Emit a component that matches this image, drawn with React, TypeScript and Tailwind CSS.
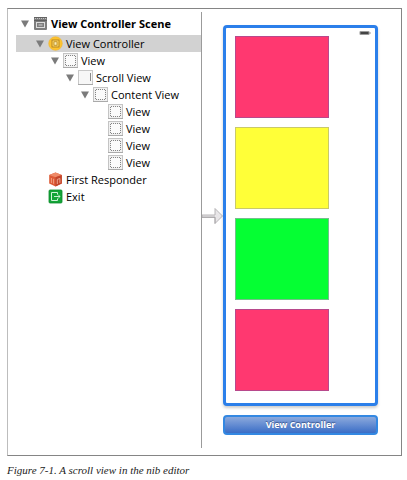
import React, { useState } from 'react';

type IconKind = 'scene' | 'controller' | 'view' | 'scroll' | 'responder' | 'exit';

interface TreeRow {
  label: string;
  icon: IconKind;
  indent: string;
  level: number;
  expandable?: boolean;
}

const rows: TreeRow[] = [
  { label: 'View Controller', icon: 'controller', indent: 'pl-[19px]', level: 2, expandable: true },
  { label: 'View', icon: 'view', indent: 'pl-[34px]', level: 3, expandable: true },
  { label: 'Scroll View', icon: 'scroll', indent: 'pl-[49px]', level: 4, expandable: true },
  { label: 'Content View', icon: 'view', indent: 'pl-[64px]', level: 5, expandable: true },
  { label: 'View', icon: 'view', indent: 'pl-[79px]', level: 6 },
  { label: 'View', icon: 'view', indent: 'pl-[79px]', level: 6 },
  { label: 'View', icon: 'view', indent: 'pl-[79px]', level: 6 },
  { label: 'View', icon: 'view', indent: 'pl-[79px]', level: 6 },
  { label: 'First Responder', icon: 'responder', indent: 'pl-[19px]', level: 2 },
  { label: 'Exit', icon: 'exit', indent: 'pl-[19px]', level: 2 },
];

const blocks = [
  'bg-[#ff3870] border-[#b8498c]',
  'bg-[#ffff38] border-[#c9c96a]',
  'bg-[#05ff33] border-[#74bf8c]',
  'bg-[#ff3870] border-[#b8498c]',
];

function RowIcon({ kind }: { kind: IconKind }) {
  return (
    <svg viewBox="0 0 15 15" className="size-[15px] shrink-0" fill="none" aria-hidden="true">
      {kind === 'scene' && (
        <>
          <rect x="1" y="1" width="13" height="13" rx="1" fill="#7d7d7d" />
          <path d="M1 1.5h13" stroke="#636363" />
          <path d="M2 2.5h11" stroke="#c4c4c4" strokeDasharray="1 1" />
          <path d="M1 4.5h13" stroke="#5f5f5f" />
          <rect x="3.5" y="6.5" width="8" height="5" stroke="#dcdcdc" />
          <path d="M5.5 9h4" stroke="#d2d2d2" />
        </>
      )}
      {kind === 'controller' && (
        <>
          <circle cx="7.5" cy="7.5" r="6.8" fill="#fdc32f" stroke="#f2b52c" strokeWidth="0.6" />
          <rect x="4" y="4" width="7" height="7" fill="#ffd65c" stroke="#a5781c" strokeWidth="0.8" />
          <rect x="6" y="5.8" width="3" height="3.4" fill="#fff0b0" stroke="#a5781c" strokeWidth="0.7" />
        </>
      )}
      {kind === 'view' && (
        <>
          <rect x="0.5" y="0.5" width="14" height="14" fill="#f1f1f1" stroke="#c4c4c4" />
          <path d="M0 14.5h15" stroke="#aaaaaa" />
          <rect x="3" y="3" width="9" height="9" fill="#fbfbfb" />
          <path d="M3 2.5h9M3 12.5h9M2.5 3v9M12.5 3v9" stroke="#858585" strokeDasharray="1 1" />
        </>
      )}
      {kind === 'scroll' && (
        <>
          <rect x="0.5" y="0.5" width="14" height="14" fill="#f7f7f7" stroke="#c8c8c8" />
          <path d="M0 14.5h15" stroke="#a8a8a8" />
          <path d="M12.5 3v8" stroke="#8a8a8a" />
        </>
      )}
      {kind === 'responder' && (
        <>
          <path d="M7.5 0.5 13.8 3v8.6L7.5 14.5 1.2 11.6V3z" fill="#dd5a36" />
          <path d="M7.5 0.5 13.8 3 7.5 5.2 1.2 3z" fill="#ee8a68" />
          <path d="M7.5 5.2 13.8 3v8.6L7.5 14.5z" fill="#c2442a" />
          <path d="M3.4 6v5M5.6 6.8v5" stroke="#f3a68a" strokeWidth="0.9" />
          <path d="M9.3 12V7.4l2.6-.9v4.4" stroke="#f3b098" strokeWidth="0.9" />
        </>
      )}
      {kind === 'exit' && (
        <>
          <rect x="1" y="1" width="13" height="13" rx="1" fill="#14a538" stroke="#0b8c2b" strokeWidth="0.8" />
          <path d="M9.5 5.5v-2h-6v8h6v-2" stroke="#d0f3d8" />
          <path d="M6 7.5h6M10.2 5.7l1.8 1.8-1.8 1.8" stroke="#d9f7df" strokeWidth="0.9" />
        </>
      )}
    </svg>
  );
}

function Disclosure({ label }: { label: string }) {
  return (
    <button type="button" aria-label={`Toggle ${label}`} className="flex h-4 w-[10px] shrink-0 items-center">
      <svg viewBox="0 0 10 8" className="h-2 w-[10px]" aria-hidden="true">
        <path d="M1 0.5h8L5 7.5z" fill="#7b7b7b" />
      </svg>
    </button>
  );
}

function Outline() {
  const [selected, setSelected] = useState(0);
  return (
    <nav aria-label="Document outline" className="w-[193px] shrink-0 pl-2 text-[11px] leading-4 text-black">
      <div className="flex h-[23px] items-center gap-[3px] pl-1 font-bold">
        <Disclosure label="View Controller Scene" />
        <RowIcon kind="scene" />
        <span className="whitespace-nowrap">View Controller Scene</span>
      </div>
      <ul role="tree">
        {rows.map((row, i) => (
          <li
            key={i}
            role="treeitem"
            aria-level={row.level}
            aria-selected={i === selected}
            onClick={() => setSelected(i)}
            className={`flex h-[17px] items-center gap-[3px] font-medium ${row.indent} ${i === selected ? 'bg-[#d2d2d2]' : ''}`}
          >
            {row.expandable ? <Disclosure label={row.label} /> : <span className="w-[10px] shrink-0" />}
            <RowIcon kind={row.icon} />
            <span className="whitespace-nowrap">{row.label}</span>
          </li>
        ))}
      </ul>
    </nav>
  );
}

function EntryArrow() {
  return (
    <svg viewBox="0 0 21 18" className="mt-[195px] h-[18px] w-[21px] shrink-0" aria-hidden="true">
      <path d="M0 8h13V1.5L20.5 9 13 16.5V10H0z" fill="#e8e6e8" stroke="#b0aeb0" strokeWidth="0.9" />
      <path d="M0 10.5h13v6" fill="none" stroke="#a3a1a3" strokeWidth="0.8" />
    </svg>
  );
}

function Canvas() {
  return (
    <section aria-label="Canvas" className="flex flex-1 items-start border-l border-[#9b9b9b] pr-[23px] pb-[13px]">
      <EntryArrow />
      <div className="flex flex-1 flex-col gap-[9px] pt-[13px]">
        <div className="rounded-[4px] border-[3px] border-[#2b7fea] bg-white pb-3 shadow-[0_2px_3px_rgba(0,0,0,0.2)]">
          <div className="flex h-2 items-end justify-end pr-1">
            <svg viewBox="0 0 12 6" className="h-[6px] w-3" aria-hidden="true">
              <rect x="0.5" y="1" width="10" height="4" rx="1" fill="#9a9a9a" />
              <rect x="1.5" y="2" width="8" height="2" fill="#444" />
              <rect x="10.5" y="2" width="1" height="2" fill="#999" />
            </svg>
          </div>
          <div className="flex flex-col gap-[9px] pl-[9px]">
            {blocks.map((block, i) => (
              <div key={i} className={`h-[82px] w-[94px] border ${block}`} />
            ))}
          </div>
        </div>
        <button
          type="button"
          className="h-5 rounded-[4px] border-2 border-[#3388e2] bg-linear-to-b from-[#8ca9dc] to-[#3a6dc6] text-[9px] leading-4 font-bold text-white text-shadow-[0_-1px_1px_rgba(20,40,90,0.6)]"
        >
          View Controller
        </button>
      </div>
    </section>
  );
}

export default function App() {
  return (
    <main className="min-h-screen bg-white pt-2 pr-[5px] pl-[7px] font-['Open_Sans','Noto_Sans',sans-serif]">
      <figure>
        <div className="flex border border-[#858585] border-l-[#bdbdbd] pt-[3px] pb-[7px]">
          <Outline />
          <Canvas />
        </div>
        <figcaption className="pt-[6px] font-['Liberation_Serif',serif] text-[11px] leading-4 text-[#222] italic">
          Figure 7-1. A scroll view in the nib editor
        </figcaption>
      </figure>
    </main>
  );
}
